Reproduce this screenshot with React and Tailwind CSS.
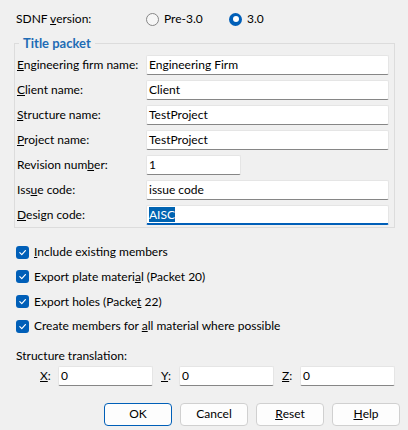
import React from 'react';

const font = { fontFamily: 'Lato, "Noto Sans", sans-serif' };

function Field({ label, value, width = 'w-[243px]', focused }) {
  return (
    <div className="flex items-center h-[20px]">
      <span className="w-[129px] shrink-0 whitespace-nowrap">{label}</span>
      <div
        className={`${width} h-[20px] bg-white border border-[#e5e5e5] rounded-[2px] flex items-center px-[2px] ${
          focused ? 'border-b-2 border-b-[#005fb8]' : 'border-b-[#868686]'
        }`}
      >
        {focused ? <span className="bg-[#0063b1] text-white leading-[15px]">{value}</span> : value}
      </div>
    </div>
  );
}

function Check({ children }) {
  return (
    <div className="flex items-center h-[24.67px] gap-[5px]">
      <div className="w-[13px] h-[13px] rounded-[3px] bg-[#005fb8] flex items-center justify-center shrink-0">
        <svg width="9" height="9" viewBox="0 0 10 10" fill="none">
          <path d="M2 5.2 L4.2 7.3 L8.2 2.8" stroke="white" strokeWidth="1.3" strokeLinecap="round" strokeLinejoin="round" />
        </svg>
      </div>
      <span className="whitespace-nowrap">{children}</span>
    </div>
  );
}

function Radio({ checked, children }) {
  return (
    <div className="flex items-center gap-[5px]">
      {checked ? (
        <div className="w-[13px] h-[13px] rounded-full bg-[#005fb8] flex items-center justify-center">
          <div className="w-[6px] h-[6px] rounded-full bg-white" />
        </div>
      ) : (
        <div className="w-[13px] h-[13px] rounded-full border border-[#868686] bg-[#f6f6f6]" />
      )}
      <span>{children}</span>
    </div>
  );
}

function Button({ children, primary }) {
  return (
    <div
      className={`w-[68px] h-[23px] rounded-[4px] bg-[#fdfdfd] flex items-center justify-center border ${
        primary ? 'border-[#005fb8]' : 'border-[#d0d0d0]'
      }`}
    >
      {children}
    </div>
  );
}

function Coord({ label, value }) {
  return (
    <div className="flex items-center">
      <span className="w-[18px] shrink-0">{label}</span>
      <div className="w-[95px] h-[20px] bg-white border border-[#e5e5e5] border-b-[#868686] rounded-[2px] flex items-center px-[2px]">
        {value}
      </div>
    </div>
  );
}

export default function App() {
  return (
    <div className="w-[408px] h-[430px] bg-[#f0f0f0] text-[12px] text-black overflow-hidden" style={font}>
      <div className="flex items-center h-[20px] mt-[9px] pl-[16px]">
        <span className="w-[130px]">SDNF <u>v</u>ersion:</span>
        <div className="w-[83px]">
          <Radio>Pre-3.0</Radio>
        </div>
        <Radio checked>3.0</Radio>
      </div>

      <fieldset className="ml-[14px] mt-[5px] w-[381px] border border-[#dcdcdc] pl-[2px] pb-[2px]">
        <legend className="ml-[2px] px-[4px] text-[13px] font-bold text-[#1f6cb5] leading-[18px]">Title packet</legend>
        <div className="flex flex-col gap-[5px] pt-[3px]">
          <Field label={<><u>E</u>ngineering firm name:</>} value="Engineering Firm" />
          <Field label={<><u>C</u>lient name:</>} value="Client" />
          <Field label={<><u>S</u>tructure name:</>} value="TestProject" />
          <Field label={<><u>P</u>roject name:</>} value="TestProject" />
          <Field label={<>Revision num<u>b</u>er:</>} value="1" width="w-[95px]" />
          <Field label={<>Iss<u>u</u>e code:</>} value="issue code" />
          <Field label={<><u>D</u>esign code:</>} value="AISC" focused />
        </div>
      </fieldset>

      <div className="pl-[16px] mt-[12px]">
        <Check><u>I</u>nclude existing members</Check>
        <Check>Export plate materi<u>a</u>l (Packet 20)</Check>
        <Check>Export holes (Packe<u>t</u> 22)</Check>
        <Check>Create members for <u>a</u>ll material where possible</Check>
      </div>

      <div className="pl-[16px] mt-[7px] h-[20px] flex items-center">Structure translation:</div>
      <div className="flex items-center pl-[40px] gap-[8px]">
        <Coord label={<><u>X</u>:</>} value="0" />
        <Coord label={<><u>Y</u>:</>} value="0" />
        <Coord label={<><u>Z</u>:</>} value="0" />
      </div>

      <div className="flex justify-end gap-[8px] pr-[8px] mt-[17px]">
        <Button primary>OK</Button>
        <Button>Cancel</Button>
        <Button><u>R</u>eset</Button>
        <Button><u>H</u>elp</Button>
      </div>
    </div>
  );
}
